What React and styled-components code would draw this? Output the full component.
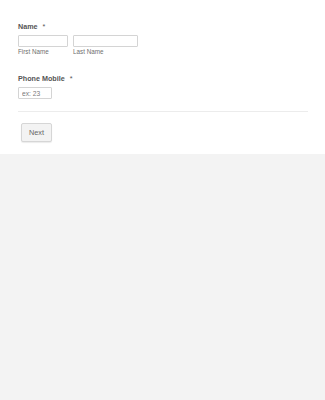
import React from 'react';
import styled, { createGlobalStyle } from 'styled-components';

const GlobalStyle = createGlobalStyle`
  html, body {
    margin: 0;
    padding: 0;
    background: #f3f3f3;
  }
  body {
    font-family: "Liberation Sans", Arial, sans-serif;
  }
`;

const FormCard = styled.form`
  background: #fff;
  padding: 21px 17px 12px 18px;
`;

const Field = styled.div`
  margin-bottom: ${props => props.spacing || 0}px;
`;

const Label = styled.div`
  font-size: 7.2px;
  line-height: 11px;
  font-weight: bold;
  color: #555;
  margin-bottom: 3px;
`;

const Required = styled.span`
  margin-left: 5px;
  color: #555;
  font-weight: normal;
`;

const InputRow = styled.div`
  display: flex;
  gap: 5px;
`;

const InputGroup = styled.div`
  display: flex;
  flex-direction: column;
`;

const TextInput = styled.input`
  display: block;
  box-sizing: border-box;
  width: ${props => props.width}px;
  height: 12px;
  margin: 0;
  padding: 0 3px;
  border: 1px solid #d4d4d4;
  border-radius: 1px;
  font-family: "Liberation Sans", Arial, sans-serif;
  font-size: 6.7px;
  color: #555;
  outline: none;

  &::placeholder {
    color: #7a7a7a;
  }
`;

const SubLabel = styled.label`
  font-size: 6.3px;
  line-height: 8px;
  margin-top: 1px;
  color: #6f6f6f;
`;

const Divider = styled.div`
  height: 1px;
  background: #ececec;
  margin: 12px 0 11px;
`;

const NextButton = styled.button`
  display: block;
  box-sizing: border-box;
  width: 31px;
  height: 19px;
  margin-left: 3px;
  padding: 0;
  background: #f3f3f3;
  border: 1px solid #d6d6d6;
  border-radius: 2px;
  box-shadow: 0 1px 1px rgba(0, 0, 0, 0.08);
  font-family: "Liberation Sans", Arial, sans-serif;
  font-size: 7.3px;
  color: #666;
`;

function App() {
  return (
    <>
      <GlobalStyle />
      <FormCard onSubmit={e => e.preventDefault()}>
        <Field spacing={17}>
          <Label>
            Name<Required>*</Required>
          </Label>
          <InputRow>
            <InputGroup>
              <TextInput width={50} />
              <SubLabel>First Name</SubLabel>
            </InputGroup>
            <InputGroup>
              <TextInput width={65} />
              <SubLabel>Last Name</SubLabel>
            </InputGroup>
          </InputRow>
        </Field>
        <Field>
          <Label>
            Phone Mobile<Required>*</Required>
          </Label>
          <TextInput width={34} placeholder="ex: 23" />
        </Field>
        <Divider />
        <NextButton type="submit">Next</NextButton>
      </FormCard>
    </>
  );
}

export default App;
